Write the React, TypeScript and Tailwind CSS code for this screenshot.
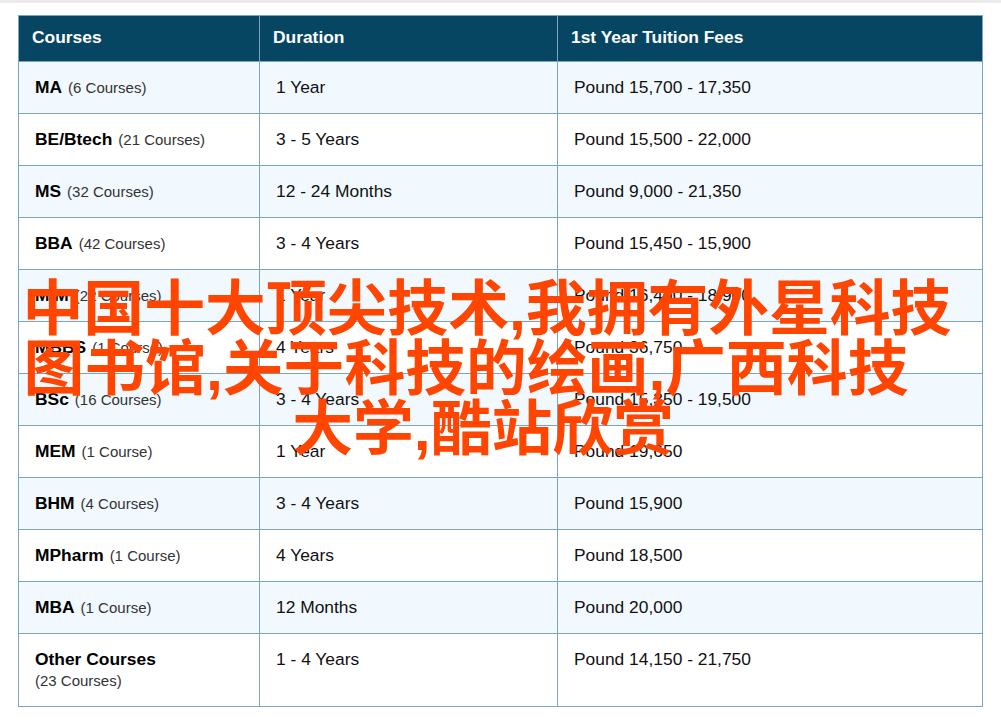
const rows: { name: string; count: string; duration: string; fees: string }[] = [
  { name: "MA", count: "(6 Courses)", duration: "1 Year", fees: "Pound 15,700 - 17,350" },
  { name: "BE/Btech", count: "(21 Courses)", duration: "3 - 5 Years", fees: "Pound 15,500 - 22,000" },
  { name: "MS", count: "(32 Courses)", duration: "12 - 24 Months", fees: "Pound 9,000 - 21,350" },
  { name: "BBA", count: "(42 Courses)", duration: "3 - 4 Years", fees: "Pound 15,450 - 15,900" },
  { name: "MIM", count: "(22 Courses)", duration: "1 Year", fees: "Pound 16,400 - 18,900" },
  { name: "MBBS", count: "(1 Course)", duration: "4 Years", fees: "Pound 36,750" },
  { name: "BSc", count: "(16 Courses)", duration: "3 - 4 Years", fees: "Pound 15,350 - 19,500" },
  { name: "MEM", count: "(1 Course)", duration: "1 Year", fees: "Pound 19,650" },
  { name: "BHM", count: "(4 Courses)", duration: "3 - 4 Years", fees: "Pound 15,900" },
  { name: "MPharm", count: "(1 Course)", duration: "4 Years", fees: "Pound 18,500" },
  { name: "MBA", count: "(1 Course)", duration: "12 Months", fees: "Pound 20,000" },
];

export default function App() {
  return (
    <div className="relative h-[720px] w-[1001px] overflow-hidden bg-white font-['Liberation_Sans',Arial,sans-serif]">
      <div className="h-[3px] bg-[#ececec]" />
      <div className="pl-[18px] pt-[12px]">
        <div className="w-[965px] border-x border-b border-[#7aa5bd]">
          <div className="grid h-[46px] grid-cols-[241px_298px_1fr] border-t border-[#7aa5bd] bg-[#064663] text-[17.4px] font-bold text-white">
            <div className="border-r border-[#7aa5bd] pl-[13px] pt-[11px] leading-[20px]">Courses</div>
            <div className="border-r border-[#7aa5bd] pl-[13px] pt-[11px] leading-[20px]">Duration</div>
            <div className="pl-[13px] pt-[11px] leading-[20px]">1st Year Tuition Fees</div>
          </div>
          {rows.map((r, i) => (
            <div
              key={r.name}
              className={`grid h-[52px] grid-cols-[241px_298px_1fr] border-t border-[#7aa5bd] text-[#111111] ${i % 2 === 0 ? "bg-[#f1f9fe]" : "bg-white"}`}
            >
              <div className="border-r border-[#7aa5bd] pl-[16px] pt-[15px] leading-[20px]">
                <span className="text-[17.4px] font-bold text-black">{r.name}</span>
                <span className="ml-[6px] text-[15px] text-[#333333]">{r.count}</span>
              </div>
              <div className="border-r border-[#7aa5bd] pl-[16px] pt-[15px] text-[17.4px] leading-[20px]">{r.duration}</div>
              <div className="pl-[16px] pt-[15px] text-[17.4px] leading-[20px]">{r.fees}</div>
            </div>
          ))}
          <div className="grid h-[73px] grid-cols-[241px_298px_1fr] border-t border-[#7aa5bd] text-[#111111]">
            <div className="border-r border-[#7aa5bd] pl-[16px] pt-[15px]">
              <div className="text-[17.4px] font-bold leading-[20px] text-black">Other Courses</div>
              <div className="mt-[2px] text-[15px] leading-[20px] text-[#333333]">(23 Courses)</div>
            </div>
            <div className="border-r border-[#7aa5bd] pl-[16px] pt-[15px] text-[17.4px] leading-[20px]">1 - 4 Years</div>
            <div className="pl-[16px] pt-[15px] text-[17.4px] leading-[20px]">Pound 14,150 - 21,750</div>
          </div>
        </div>
      </div>
      <div className="absolute left-0 top-[279px] w-[974px] text-center font-['Liberation_Sans','Noto_Sans_CJK_SC',sans-serif] text-[60.8px] font-bold leading-[60px] text-[#ff4500]">
        <div>中国十大顶尖技术,我拥有外星科技</div>
        <div className="pr-[42px]">图书馆,关于科技的绘画,广西科技</div>
        <div className="pr-[8px]">大学,酷站欣赏</div>
      </div>
    </div>
  );
}
